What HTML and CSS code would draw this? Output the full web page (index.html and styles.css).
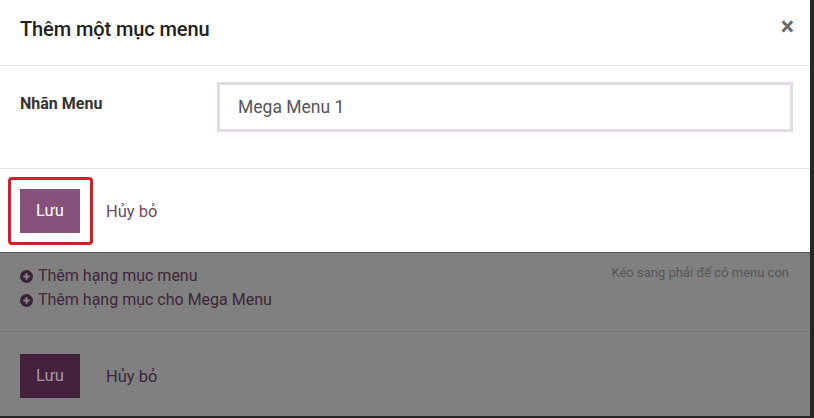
FILE: index.html
```html
<!DOCTYPE html>
<html lang="vi">
<head>
<meta charset="utf-8">
<title>Thêm một mục menu</title>
<link rel="stylesheet" href="styles.css">
</head>
<body>
<div class="page">
  <div class="modal">
    <div class="modal-header">
      <h4 class="modal-title">Thêm một mục menu</h4>
      <span class="close">×</span>
    </div>
    <div class="modal-body">
      <label class="field-label">Nhãn Menu</label>
      <div class="input">Mega Menu 1</div>
    </div>
    <div class="modal-footer">
      <div class="btn-wrap">
        <span class="btn btn-primary">Lưu</span>
        <span class="highlight"></span>
      </div>
      <span class="btn-link">Hủy bỏ</span>
    </div>
  </div>
  <div class="under">
    <div class="under-body">
      <div class="links">
        <div class="add-link"><span class="plus"><svg width="13" height="13" viewBox="0 0 13 13"><circle cx="6.5" cy="6.5" r="6.5" fill="#3a2236"/><path d="M6.5 3.2v6.6M3.2 6.5h6.6" stroke="#808080" stroke-width="2.2"/></svg></span>Thêm hạng mục menu</div>
        <div class="add-link"><span class="plus"><svg width="13" height="13" viewBox="0 0 13 13"><circle cx="6.5" cy="6.5" r="6.5" fill="#3a2236"/><path d="M6.5 3.2v6.6M3.2 6.5h6.6" stroke="#808080" stroke-width="2.2"/></svg></span>Thêm hạng mục cho Mega Menu</div>
      </div>
      <div class="hint">Kéo sang phải để có menu con</div>
    </div>
    <div class="under-footer">
      <span class="btn btn-dim">Lưu</span>
      <span class="btn-link dim">Hủy bỏ</span>
    </div>
  </div>
</div>
</body>
</html>
```
FILE: styles.css
```css
* { box-sizing: border-box; }
html, body { margin: 0; padding: 0; }
body {
  background: #262626;
  font-family: Roboto, "Noto Sans", sans-serif;
  width: 814px;
  height: 418px;
  overflow: hidden;
}
.page {
  width: 810px;
}
.modal {
  background: #fff;
  height: 252px;
  display: flex;
  flex-direction: column;
}
.modal-header {
  height: 66px;
  border-bottom: 1px solid #e6e6e6;
  display: flex;
  align-items: flex-start;
  justify-content: space-between;
  padding: 15px 20px 0 20px;
}
.modal-title {
  margin: 0;
  font-size: 20px;
  font-weight: 500;
  color: #212121;
  letter-spacing: -0.1px;
  line-height: 28px;
}
.close {
  font-size: 25px;
  font-weight: 700;
  color: #6a6a6a;
  line-height: 22px;
  margin-top: 1px;
  margin-right: -4px;
}
.modal-body {
  height: 103px;
  border-bottom: 1px solid #e6e6e6;
  display: flex;
  align-items: flex-start;
  padding: 16px 17px 0 20px;
}
.field-label {
  width: 197px;
  font-size: 16px;
  font-weight: 700;
  color: #333;
  padding-top: 12px;
}
.input {
  flex: 1;
  height: 50px;
  border: 3px solid #e2dbe4;
  padding: 0 18px;
  font-size: 17.5px;
  color: #555;
  line-height: 44px;
}
.modal-footer {
  flex: 1;
  display: flex;
  align-items: flex-start;
  padding: 20px 20px 0 20px;
}
.btn-wrap {
  position: relative;
  margin-right: 26px;
}
.btn {
  display: block;
  width: 60px;
  height: 44px;
  line-height: 44px;
  text-align: center;
  font-size: 16.5px;
}
.btn-primary {
  background: #855079;
  color: #fff;
}
.highlight {
  position: absolute;
  left: -12px;
  top: -12px;
  width: 85px;
  height: 68px;
  border: 3px solid #c9232d;
  border-radius: 4px;
}
.btn-link {
  font-size: 16.5px;
  color: #6e4a66;
  line-height: 46px;
}
.under {
  background: #808080;
  height: 164px;
  border-top: 1px solid #5a5a5a;
}
.under-body {
  height: 79px;
  border-bottom: 1px solid #747474;
  display: flex;
  justify-content: space-between;
  padding: 11px 21px 0 20px;
}
.add-link {
  font-size: 16px;
  line-height: 24px;
  color: #3e2639;
  display: flex;
  align-items: center;
}
.plus {
  display: inline-flex;
  width: 18px;
  margin-top: 1px;
}
.hint {
  font-size: 13px;
  color: #555;
  padding-top: 1px;
}
.under-footer {
  display: flex;
  align-items: flex-start;
  padding: 22px 20px 0 20px;
  gap: 26px;
}
.btn-dim {
  background: #44213d;
  color: #a898a6;
}
.btn-link.dim {
  color: #3e2639;
}
```
